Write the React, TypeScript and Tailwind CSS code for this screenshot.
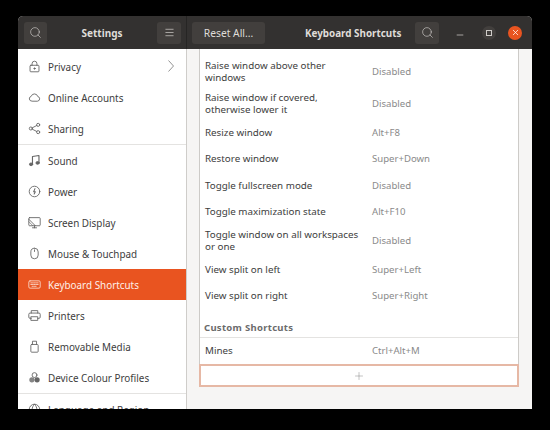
import React from "react";
import { Search, Menu, X, Minus, Plus } from "lucide-react";

const S = { stroke: "currentColor", fill: "none", strokeWidth: 1.1, strokeLinecap: "round" as const, strokeLinejoin: "round" as const };
const Ic = ({ children }: { children: React.ReactNode }) => (
  <svg width="13" height="13" viewBox="0 0 16 16" {...S}>{children}</svg>
);

const icons: Record<string, React.ReactNode> = {
  lock: <Ic><path d="M5 6.5V4.5a3 3 0 0 1 6 0v2" /><rect x="2.5" y="6.5" width="11" height="8" rx="1" /><circle cx="8" cy="10.5" r=".8" fill="currentColor" /></Ic>,
  cloud: <Ic><path d="M4.5 12.5a3 3 0 0 1-.6-5.9A4.2 4.2 0 0 1 12 6.8a2.9 2.9 0 0 1 0 5.7z" /></Ic>,
  share: <Ic><circle cx="3.5" cy="8" r="1.9" /><circle cx="12.5" cy="3.5" r="1.9" /><circle cx="12.5" cy="12.5" r="1.9" /><path d="M5.2 7.2l5.6-2.9M5.2 8.8l5.6 2.9" /></Ic>,
  music: <Ic><path d="M5.5 12.5V3l8-1.2v9" strokeWidth="1.4" /><ellipse cx="3.8" cy="12.7" rx="2" ry="1.7" fill="currentColor" /><ellipse cx="11.8" cy="11" rx="2" ry="1.7" fill="currentColor" /></Ic>,
  power: <Ic><circle cx="8" cy="8" r="6.5" /><path d="M8.6 4.5L7 8.3h2L7.6 11" strokeWidth="1.3" /></Ic>,
  display: <Ic><rect x="1" y="2" width="14" height="10" rx="1" /><path d="M5.5 14.5h5M8 12v2.5M1 4l8 8" /><path d="M1 7l5 5" strokeWidth=".8" /></Ic>,
  mouse: <Ic><rect x="3.5" y="1.5" width="9" height="13" rx="4.5" /><path d="M8 3.5v2" /></Ic>,
  keyboard: <Ic><rect x="1" y="3.5" width="14" height="9" rx="1.5" /><path d="M3.5 6h9M3.5 8h9M5 10.2h6" strokeDasharray="1 1" /></Ic>,
  printer: <Ic><path d="M4 5V2h8v3" /><path d="M4 11.5H2.5A1.5 1.5 0 0 1 1 10V6.5A1.5 1.5 0 0 1 2.5 5h11A1.5 1.5 0 0 1 15 6.5V10a1.5 1.5 0 0 1-1.5 1.5H12" /><path d="M4 9.5h8V14H4z" /></Ic>,
  media: <Ic><rect x="3.5" y="5.5" width="9" height="9.5" rx="1" /><path d="M5.5 5.5V1.5h5v4" /></Ic>,
  color: <Ic><circle cx="8" cy="5" r="3" fill="none" /><circle cx="4.8" cy="10.8" r="3.2" fill="currentColor" stroke="none" opacity=".8" /><circle cx="11.2" cy="10.8" r="3.2" fill="currentColor" stroke="none" /></Ic>,
  globe: <Ic><circle cx="8" cy="8" r="6.5" /><path d="M1.5 8h13M8 1.5c-4 4-4 9 0 13M8 1.5c4 4 4 9 0 13" /></Ic>,
};

const nav: [string, string, string?][] = [
  ["lock", "Privacy", "chev"],
  ["cloud", "Online Accounts"],
  ["share", "Sharing", "sep"],
  ["music", "Sound"],
  ["power", "Power"],
  ["display", "Screen Display"],
  ["mouse", "Mouse & Touchpad"],
  ["keyboard", "Keyboard Shortcuts", "sel"],
  ["printer", "Printers"],
  ["media", "Removable Media"],
  ["color", "Device Colour Profiles", "sep"],
  ["globe", "Language and Region"],
];

const rows: [string, string, string][] = [
  ["Raise window above other windows", "Disabled", "h-[39px] pt-[7px]"],
  ["Raise window if covered, otherwise lower it", "Disabled", "h-[32px]"],
  ["Resize window", "Alt+F8", "h-[26px]"],
  ["Restore window", "Super+Down", "h-[26px]"],
  ["Toggle fullscreen mode", "Disabled", "h-[27px]"],
  ["Toggle maximization state", "Alt+F10", "h-[26px]"],
  ["Toggle window on all workspaces or one", "Disabled", "h-[32px]"],
  ["View split on left", "Super+Left", "h-[26px]"],
  ["View split on right", "Super+Right", "h-[26px]"],
];

export default function App() {
  return (
    <div className="w-[550px] h-[430px] bg-black pt-[16px] pl-[18px] overflow-hidden font-['Noto_Sans',sans-serif] text-[9.8px] leading-[12px]">
      <div className="w-[514px] h-[393px] flex flex-col rounded-t-[5px] overflow-hidden bg-[#f6f5f4]">
        <header className="h-[33px] shrink-0 flex items-center bg-[#333130] text-[#dfdcd8]">
          <div className="w-[169px] shrink-0 h-full flex items-center justify-between pl-[6px] pr-[5px] border-r border-[#262524]">
            <div className="w-[23px] h-[22px] rounded-[3px] bg-[#423f3d] flex items-center justify-center"><Search size={13} strokeWidth={1.1} /></div>
            <div className="font-bold text-[10px]">Settings</div>
            <div className="w-[24px] h-[22px] rounded-[3px] bg-[#423f3d] flex items-center justify-center"><Menu size={11} strokeWidth={1.4} /></div>
          </div>
          <div className="flex-1 h-full flex items-center pl-[5px]">
            <div className="w-[73px] h-[22px] rounded-[3px] bg-[#423f3d] flex items-center justify-center text-[10.3px]">Reset All...</div>
            <div className="ml-[40px] w-[97px] font-bold text-[9.85px] whitespace-nowrap">Keyboard Shortcuts</div>
            <div className="ml-[13px] w-[24px] h-[22px] rounded-[3px] bg-[#423f3d] flex items-center justify-center"><Search size={13} strokeWidth={1.1} /></div>
            <div className="ml-[13px] w-[16px] flex justify-center"><Minus size={10} strokeWidth={1.6} className="translate-y-[2px]" /></div>
            <div className="ml-[14px] w-[14px] h-[14px] rounded-full bg-[#423f3d] flex items-center justify-center"><div className="w-[6px] h-[6px] border border-[#cfccc8]" /></div>
            <div className="ml-[12px] w-[14px] h-[14px] rounded-full bg-[#e95420] flex items-center justify-center"><X size={9} strokeWidth={2} className="text-white" /></div>
          </div>
        </header>
        <main className="flex-1 flex min-h-0">
          <aside className="w-[168px] shrink-0 bg-white pt-[2px] border-r border-[#cfcdca] box-content overflow-hidden text-[#3d3d3d] text-[9.9px]">
            {nav.map(([ic, label, flag]) => (
              <React.Fragment key={label}>
                <div className={`h-[31px] flex items-center pl-[10px] pr-[12px] ${flag === "sel" ? "bg-[#e95420] text-[#fdf0ea]" : ""}`}>
                  <span className={`w-[20px] shrink-0 ${flag === "sel" ? "text-[#f9d6c8]" : "text-[#666666]"}`}>{icons[ic]}</span>
                  <span className="flex-1 whitespace-nowrap">{label}</span>
                  {flag === "chev" && (
                    <svg width="6" height="12" viewBox="0 0 6 12" fill="none" stroke="#666666" strokeWidth="0.7" className="-translate-y-[1px]"><path d="M0.5 0.5L5.5 6L0.5 11.5" /></svg>
                  )}
                </div>
                {flag === "sep" && <div className="h-px bg-[#e4e3e1]" />}
              </React.Fragment>
            ))}
          </aside>
          <section className="flex-1 pl-[12px] pr-[13px] min-w-0">
            <div className="bg-white border-x border-[#cdcbc8] text-[#3d3d3d]">
              {rows.map(([a, b, h]) => (
                <div key={a} className={`${h} flex items-center pl-[5px]`}>
                  <div className="w-[167px] shrink-0 leading-[12px] pr-[10px]">{a}</div>
                  <div className="text-[#8a8a8a] text-[9.6px]">{b}</div>
                </div>
              ))}
              <div className="h-[29px] flex items-end pl-[4px] pb-[3px] border-b border-[#e4e3e1] font-bold text-[9.5px] text-[#6b6b6b] tracking-[0.3px]">Custom Shortcuts</div>
              <div className="h-[26px] flex items-center pl-[5px]">
                <div className="w-[167px] shrink-0">Mines</div>
                <div className="text-[#8a8a8a] text-[9.6px]">Ctrl+Alt+M</div>
              </div>
            </div>
            <div className="h-[23px] bg-white border-2 border-[#e6b8a5] flex items-center justify-center text-[#666666]"><Plus size={12} strokeWidth={0.8} /></div>
          </section>
        </main>
      </div>
    </div>
  );
}
